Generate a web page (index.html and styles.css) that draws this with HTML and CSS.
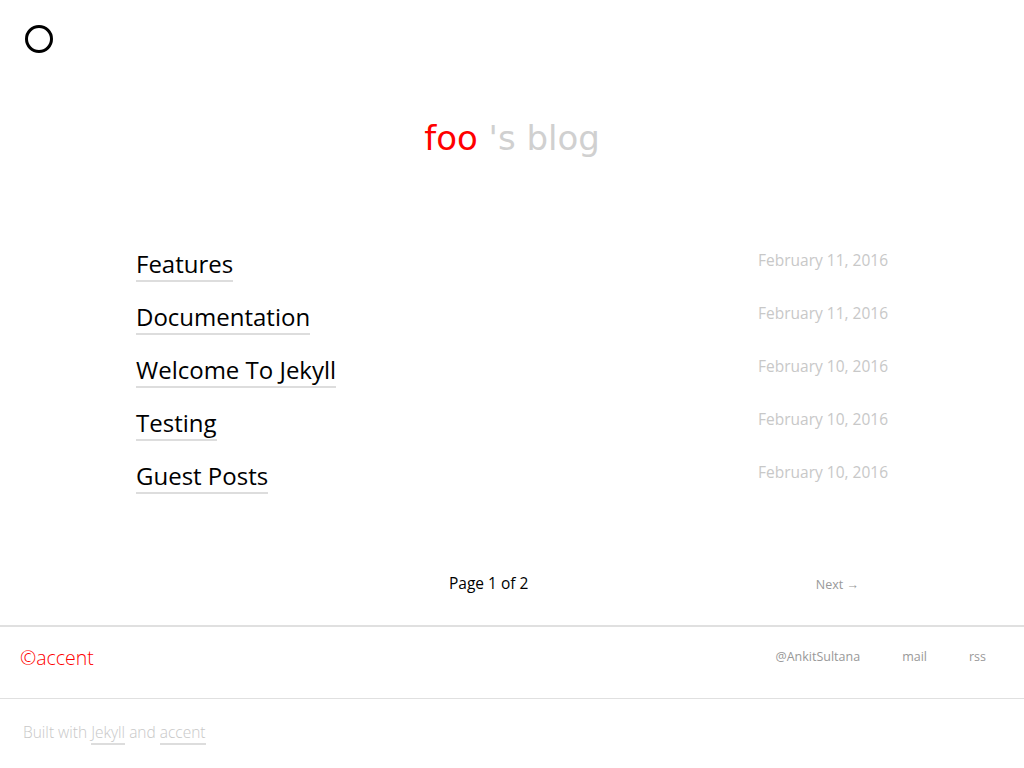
FILE: index.html
```html
<!DOCTYPE html>
<html>
<head>
<meta charset="utf-8">
<link rel="stylesheet" href="styles.css">
</head>
<body>
<header class="top">
  <a class="logo" href="#"><span class="ring"></span></a>
</header>
<h1 class="site-title"><span class="owner">foo</span> 's blog</h1>
<main class="posts">
  <div class="post"><a class="post-title" href="#">Features</a><span class="post-date">February 11, 2016</span></div>
  <div class="post"><a class="post-title" href="#">Documentation</a><span class="post-date">February 11, 2016</span></div>
  <div class="post"><a class="post-title" href="#">Welcome To Jekyll</a><span class="post-date">February 10, 2016</span></div>
  <div class="post"><a class="post-title" href="#">Testing</a><span class="post-date">February 10, 2016</span></div>
  <div class="post"><a class="post-title" href="#">Guest Posts</a><span class="post-date">February 10, 2016</span></div>
</main>
<nav class="pagination">
  <span class="page-num">Page 1 of 2</span>
  <a class="next" href="#">Next →</a>
</nav>
<footer class="footer">
  <div class="footer-main">
    <a class="brand" href="#">©accent</a>
    <div class="social">
      <a href="#">@AnkitSultana</a>
      <a href="#">mail</a>
      <a href="#">rss</a>
    </div>
  </div>
  <div class="credits">Built with <a href="#">Jekyll</a> and <a href="#">accent</a></div>
</footer>
</body>
</html>
```

FILE: styles.css
```css
html, body {
  margin: 0;
  padding: 0;
  background: #fff;
}
body {
  font-family: "Open Sans", "Noto Sans", sans-serif;
  color: #000;
}
a { text-decoration: none; color: inherit; }

.top {
  height: 78px;
  padding: 25px 0 0 25px;
  box-sizing: border-box;
}
.logo { display: inline-block; }
.ring {
  display: block;
  width: 28px;
  height: 28px;
  border: 3px solid #000;
  border-radius: 50%;
  box-sizing: border-box;
}

.site-title {
  margin: 36px 0 0;
  text-align: center;
  font-family: "DejaVu Sans", sans-serif;
  font-weight: normal;
  font-size: 34px;
  line-height: 48px;
  color: #d0d0d0;
}
.owner { color: #ff0000; }

.posts {
  width: 752px;
  margin: 86px auto 0;
  display: flex;
  flex-direction: column;
}
.post {
  display: flex;
  justify-content: space-between;
  align-items: flex-start;
  height: 53px;
}
.post-title {
  font-size: 24px;
  line-height: 32px;
  color: #000;
  border-bottom: 2px solid #ddd;
}
.post-date {
  font-size: 15.5px;
  line-height: 20px;
  margin-top: 2px;
  color: #c8c8c8;
  font-weight: 500;
}

.pagination {
  display: flex;
  align-items: baseline;
  margin: 59px 0 0 449px;
  width: 410px;
  justify-content: space-between;
  height: 53px;
}
.page-num {
  font-size: 15.5px;
  color: #000;
}
.next {
  font-size: 12.5px;
  color: #999;
}

.footer {
  border-top: 2px solid #e0e0e0;
}
.footer-main {
  display: flex;
  justify-content: space-between;
  align-items: flex-start;
  height: 72px;
  box-sizing: border-box;
  padding: 18px 38px 0 20px;
  border-bottom: 1px solid #e0e0e0;
}
.brand {
  color: #ff0000;
  font-size: 19.5px;
  line-height: 26px;
  font-weight: 300;
}
.social {
  display: flex;
  gap: 42px;
  margin-top: 3px;
  font-size: 12.5px;
  line-height: 18px;
  color: #999;
}
.credits {
  padding: 22px 23px;
  font-size: 15.5px;
  color: #c8c8c8;
  font-weight: 300;
}
.credits a {
  border-bottom: 2px solid #ddd;
}
```
